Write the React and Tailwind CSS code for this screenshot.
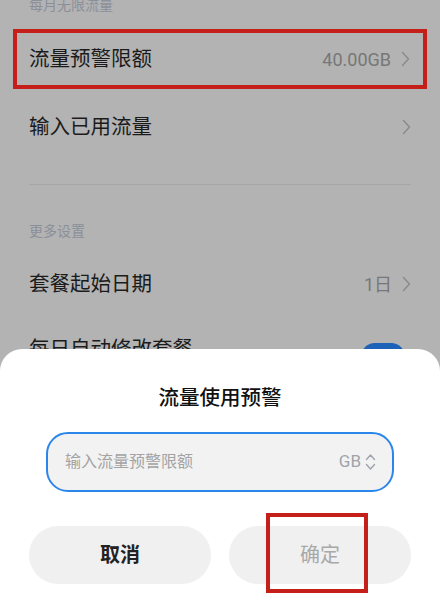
import React from "react";

const font = {
  fontFamily: '"Roboto", "Noto Sans CJK SC", "Noto Sans", sans-serif',
};

function Chevron() {
  return (
    <svg width="9" height="16" viewBox="0 0 9 16" fill="none">
      <path d="M1.5 1.5 L7.5 8 L1.5 14.5" stroke="#8a8a8a" strokeWidth="1.4" strokeLinecap="round" strokeLinejoin="round" />
    </svg>
  );
}

function UpDown() {
  return (
    <svg width="11" height="18" viewBox="0 0 11 18" fill="none">
      <path d="M1.5 6.5 L5.5 2 L9.5 6.5" stroke="#9fa3aa" strokeWidth="1.4" strokeLinecap="round" strokeLinejoin="round" />
      <path d="M1.5 11.5 L5.5 16 L9.5 11.5" stroke="#9fa3aa" strokeWidth="1.4" strokeLinecap="round" strokeLinejoin="round" />
    </svg>
  );
}

function Row({ title, value, className = "" }) {
  return (
    <div className={`flex items-center justify-between ${className}`}>
      <span className="text-[20.5px] leading-[28px] text-[#1b1b1b]">{title}</span>
      <div className="flex items-center gap-[10px]">
        {value && <span className="text-[18px] text-[#777]">{value}</span>}
        <Chevron />
      </div>
    </div>
  );
}

export default function App() {
  return (
    <div className="relative h-[600px] w-[440px] overflow-hidden bg-[#b3b3b3]" style={font}>
      {/* list behind the sheet */}
      <div className="mt-[-5px] h-[20px] px-[29px] text-[14px] leading-[20px] text-[#8b8f99]">
        每月无限流量
      </div>

      <Row
        title="流量预警限额"
        value="40.00GB"
        className="mx-[13px] mt-[14px] h-[60px] border-4 border-[#c41f19] pl-[12px] pr-[13px]"
      />

      <Row title="输入已用流量" className="h-[76px] px-[29px]" />

      <div className="mx-[29px] mt-[19px] h-px bg-[#a6a6a6]" />

      <div className="mt-[36px] h-[20px] px-[29px] text-[14px] leading-[20px] text-[#8b8f99]">
        更多设置
      </div>

      <Row title="套餐起始日期" value="1日" className="mt-[13px] h-[60px] px-[29px]" />

      <div className="flex h-[70px] items-center justify-between px-[29px]">
        <span className="text-[20.5px] leading-[28px] text-[#1b1b1b]">每日自动修改套餐</span>
        <div className="mr-[6px] mt-[16px] h-[28px] w-[44px] rounded-full bg-[#1b62b8]" />
      </div>

      {/* bottom sheet */}
      <div className="absolute inset-x-0 bottom-0 top-[349px] rounded-t-[22px] bg-white">
        <div className="pt-[34px] text-center text-[20.5px] font-medium leading-[30px] text-[#111]">
          流量使用预警
        </div>

        <div className="mx-[46px] mt-[19px] flex h-[60px] items-center justify-between rounded-[22px] border-2 border-[#2a86ea] bg-[#f2f2f2] pl-[17px] pr-[16px]">
          <span className="text-[16px] text-[#a3a3a3]">输入流量预警限额</span>
          <div className="flex items-center gap-[4px]">
            <span className="text-[17px] text-[#9fa3aa]">GB</span>
            <UpDown />
          </div>
        </div>

        <div className="mt-[34px] flex gap-[18px] px-[29px]">
          <button className="h-[58px] flex-1 rounded-full bg-[#f0f0f0] text-[20px] font-bold text-[#222]">
            取消
          </button>
          <button className="h-[58px] flex-1 rounded-full bg-[#f0f0f0] text-[20px] text-[#a8a8a8]">
            确定
          </button>
        </div>

        <div className="absolute left-[266px] top-[164px] h-[80px] w-[102px] border-4 border-[#c41f19]" />
      </div>
    </div>
  );
}
